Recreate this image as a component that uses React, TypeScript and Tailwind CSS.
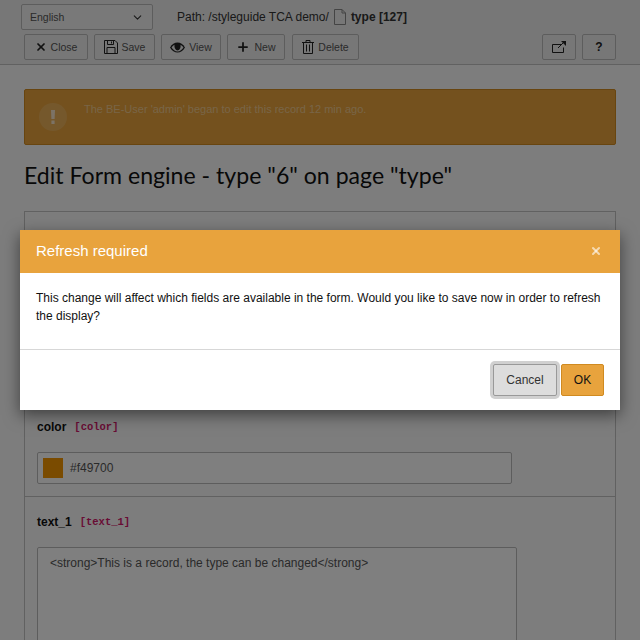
import React from 'react';
import { ChevronDown, X, Plus } from 'lucide-react';

const sans = 'font-["Liberation_Sans",Arial,sans-serif]';

function SaveIcon() {
  return (
    <svg width="14" height="14" viewBox="0 0 14 14" fill="none" stroke="currentColor" strokeWidth="1">
      <path d="M.5.5h10.500l2.500 2.500v10.500h-13z" />
      <path d="M3.500.5v4h6v-4M7.500 1.500v2M3 13.500v-6h8v6" />
    </svg>
  );
}

function EyeIcon() {
  return (
    <svg width="15" height="11" viewBox="0 0 15 11">
      <path d="M0 5.500C2 2 4.500.5 7.500.5S13 2 15 5.500C13 9 10.500 10.500 7.500 10.500S2 9 0 5.500z" fill="currentColor" />
      <path d="M1.500 5.500C3 3.500 4 3 4.500 2.800 4 6 6 8.500 7.500 8.500c2 0 3.500-2.500 3-5.700.8.400 2 1.300 3 2.700C12 7.800 10 9.500 7.500 9.500S3 7.800 1.500 5.500z" fill="#eeeeee" />
    </svg>
  );
}

function TrashIcon() {
  return (
    <svg width="12" height="14" viewBox="0 0 12 14" fill="none" stroke="currentColor" strokeWidth="1">
      <path d="M0 2.500h12M4 2.500v-2h4v2M1.500 2.500v11h9v-11M4.500 4.500v7M7.500 4.500v7" />
    </svg>
  );
}

function ExternalIcon() {
  return (
    <svg width="14" height="12" viewBox="0 0 14 12" fill="none" stroke="currentColor">
      <path d="M9 3.500H.5v8h11v-5" />
      <path d="M6 7l5-5" />
      <path d="M9 0h5v5z" fill="currentColor" stroke="none" />
    </svg>
  );
}

function FileIcon() {
  return (
    <svg width="12" height="16" viewBox="0 0 12 16" fill="none" stroke="#888" strokeWidth="1">
      <path d="M.5.5h7.500l3.500 3.500v11.500h-11z" />
      <path d="M8 .5v3.500h3.500" />
    </svg>
  );
}

function WarningMark() {
  return (
    <svg width="4" height="14" viewBox="0 0 4 14" fill="currentColor">
      <path d="M0 0h4l-.4 9H.4zM.4 10.500h3.200V14H.4z" />
    </svg>
  );
}

const actions = [
  { label: 'Close', width: 'w-16', icon: <X size={12} strokeWidth={3.5} /> },
  { label: 'Save', width: 'w-[61px]', icon: <SaveIcon /> },
  { label: 'View', width: 'w-[60px]', icon: <EyeIcon /> },
  { label: 'New', width: 'w-[58px]', icon: <Plus size={14} strokeWidth={3} /> },
  { label: 'Delete', width: 'w-[67px]', icon: <TrashIcon /> },
];

export default function App() {
  return (
    <div className={`relative h-[640px] w-[640px] overflow-hidden bg-[#fafafa] text-xs text-[#333] ${sans}`}>
      {/* Toolbar */}
      <div className="h-[65px] border-b border-[#c3c3c3] bg-[#eeeeee] pt-1">
        <div className="flex h-[26px] items-center pl-[21px]">
          <div className="flex h-[26px] w-[132px] items-center justify-between rounded-[2px] border border-[#bbbbbb] bg-[#f2f2f2] pl-2 pr-2 text-[10.500px] text-[#555]">
            <span>English</span>
            <ChevronDown size={13} strokeWidth={2} className="text-[#333]" />
          </div>
          <div className="ml-6 flex items-center">
            <span>Path: /styleguide TCA demo/</span>
            <span className="ml-[5px] mr-[5px] flex"><FileIcon /></span>
            <span className="font-bold">type [127]</span>
          </div>
        </div>
        <div className="mt-1 flex h-[26px] items-center pl-6 pr-6">
          <div className="flex gap-[6px]">
            {actions.map(action => (
              <div
                key={action.label}
                className={`flex h-[26px] items-center justify-center gap-[4px] rounded-[2px] border border-[#bbbbbb] bg-[#eeeeee] text-[10.500px] text-[#555] ${action.width} ${action.label === 'Delete' ? 'ml-[1px]' : ''}`}
              >
                <span className="flex text-[#222]">{action.icon}</span>
                <span>{action.label}</span>
              </div>
            ))}
          </div>
          <div className="ml-auto flex gap-[6px]">
            <div className="flex h-[26px] w-[34px] items-center justify-center rounded-[2px] border border-[#bbbbbb] text-[#222]">
              <ExternalIcon />
            </div>
            <div className="flex h-[26px] w-[34px] items-center justify-center rounded-[2px] border border-[#bbbbbb] text-xs font-bold text-[#222]">
              ?
            </div>
          </div>
        </div>
      </div>

      {/* Content */}
      <div className="px-6 pt-6">
        <div className="flex h-14 gap-[17px] rounded-[2px] border border-[#d08a20] bg-[#e8a33d] pl-[14px] pt-[13px] text-[11px] text-[#ffffff70]">
          <div className="flex h-[28px] w-[28px] items-center justify-center rounded-full bg-[#ffffff26] text-white/70">
            <WarningMark />
          </div>
          <div className="-mt-[2px] leading-[16px]">The BE-User 'admin' began to edit this record 12 min ago.</div>
        </div>

        <h1 className='mt-[15px] h-[30px] font-["Lato",sans-serif] text-[23.100px] leading-[30px] text-[#111]'>
          Edit Form engine - type "6" on page "type"
        </h1>

        <div className="mt-[21px] h-[500px] border border-[#c3c3c3] bg-[#fafafa]">
          <div className="h-[285px] border-b border-[#c3c3c3] px-3 pt-[206px]">
            <div className="flex h-[17px] items-center gap-2">
              <span className="font-bold text-[#111]">color</span>
              <span className='font-["Liberation_Mono",monospace] text-[10.500px] font-bold text-[#d3196b]'>[color]</span>
            </div>
            <div className="mt-[17px] flex h-8 w-[475px] items-center gap-[7px] rounded-[2px] border border-[#bbbbbb] bg-white pl-[5px] text-[#555]">
              <span className="h-5 w-5 bg-[#f49700]" />
              <span>#f49700</span>
            </div>
          </div>
          <div className="px-3 pt-[16px]">
            <div className="flex h-[17px] items-center gap-2">
              <span className="font-bold text-[#111]">text_1</span>
              <span className='font-["Liberation_Mono",monospace] text-[10.500px] font-bold text-[#d3196b]'>[text_1]</span>
            </div>
            <div className="mt-[17px] h-[140px] w-[480px] rounded-[2px] border border-[#bbbbbb] bg-white px-3 pt-[7px] text-[#555]">
              {'<strong>This is a record, the type can be changed</strong>'}
            </div>
          </div>
        </div>
      </div>

      {/* Backdrop */}
      <div className="absolute inset-0 bg-black/50" />

      {/* Modal */}
      <div className="absolute left-5 top-[230px] h-[180px] w-[600px] bg-white shadow-[0_5px_15px_rgba(0,0,0,0.5)]">
        <div className="flex h-[43px] items-center justify-between bg-[#e8a33d] pb-[2px] pl-4 pr-[18px] text-white">
          <span className="text-[15px]">Refresh required</span>
          <X size={12} strokeWidth={4} className="text-white/60" />
        </div>
        <div className="h-[77px] border-b border-[#d7d7d7] px-4 pt-4 leading-[18px] text-[#111]">
          This change will affect which fields are available in the form. Would you like to save now in order to refresh the display?
        </div>
        <div className="flex justify-end gap-1 pr-4 pt-[14px]">
          <div className="flex h-8 w-16 items-center justify-center rounded-[2px] border border-[#999] bg-[#dddddd] text-[#333] shadow-[0_0_0_3px_#d0d0d0]">
            Cancel
          </div>
          <div className="flex h-8 w-[43px] items-center justify-center rounded-[2px] border border-[#d08a20] bg-[#e8a33d] text-[#111]">
            OK
          </div>
        </div>
      </div>
    </div>
  );
}
